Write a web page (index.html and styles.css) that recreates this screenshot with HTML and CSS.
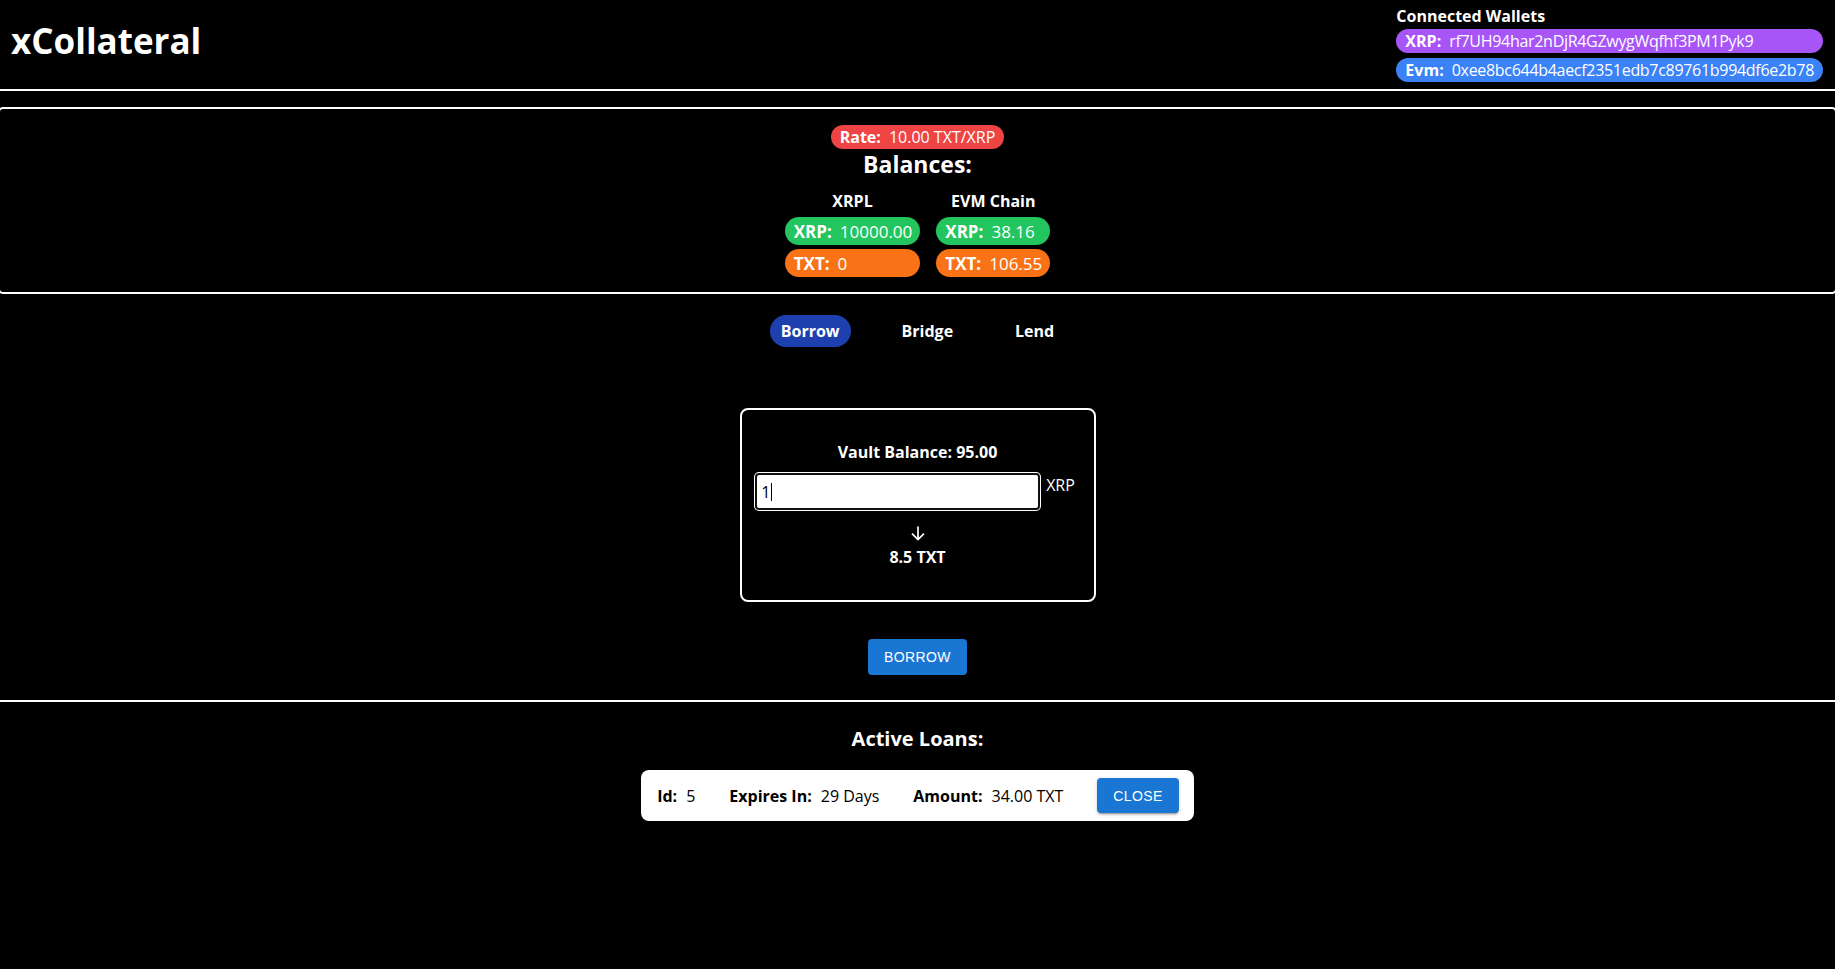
FILE: index.html
```html
<!DOCTYPE html>
<html lang="en">
<head>
<meta charset="utf-8">
<title>xCollateral</title>
<link rel="stylesheet" href="styles.css">
</head>
<body>
<div class="app">
  <header class="topbar">
    <h1 class="brand">xCollateral</h1>
    <div class="wallets">
      <div class="wallets-title">Connected Wallets</div>
      <div class="pill pill-wallet pill-purple"><b>XRP:</b><span class="addr">rf7UH94har2nDjR4GZwygWqfhf3PM1Pyk9</span></div>
      <div class="pill pill-wallet pill-blue"><b>Evm:</b><span class="addr">0xee8bc644b4aecf2351edb7c89761b994df6e2b78</span></div>
    </div>
  </header>

  <section class="balances">
    <div class="pill pill-rate"><b>Rate:</b><span>10.00 TXT/XRP</span></div>
    <h2 class="balances-title">Balances:</h2>
    <div class="chains">
      <div class="chain">
        <div class="chain-name">XRPL</div>
        <div class="pill pill-bal pill-green"><b>XRP:</b><span>10000.00</span></div>
        <div class="pill pill-bal pill-orange"><b>TXT:</b><span>0</span></div>
      </div>
      <div class="chain">
        <div class="chain-name">EVM Chain</div>
        <div class="pill pill-bal pill-green"><b>XRP:</b><span>38.16</span></div>
        <div class="pill pill-bal pill-orange"><b>TXT:</b><span>106.55</span></div>
      </div>
    </div>
  </section>

  <section class="action">
    <nav class="tabs">
      <span class="tab tab-active">Borrow</span>
      <span class="tab">Bridge</span>
      <span class="tab">Lend</span>
    </nav>

    <div class="card">
      <div class="vault">Vault Balance: 95.00</div>
      <div class="amount-row">
        <div class="amount-input">1<span class="caret"></span></div>
        <span class="unit">XRP</span>
      </div>
      <svg class="arrow" width="16" height="15" viewBox="0 0 16 15" aria-hidden="true">
        <path d="M8 0.5 V13.6 M2 7.6 L8 13.6 L14 7.6" fill="none" stroke="#fff" stroke-width="1.7"/>
      </svg>
      <div class="result">8.5 TXT</div>
    </div>

    <button class="mui-btn">Borrow</button>
  </section>

  <section class="loans">
    <h3 class="loans-title">Active Loans:</h3>
    <div class="loan">
      <div class="field"><b>Id:</b><span>5</span></div>
      <div class="field"><b>Expires In:</b><span>29 Days</span></div>
      <div class="field"><b>Amount:</b><span>34.00 TXT</span></div>
      <button class="mui-btn">Close</button>
    </div>
  </section>
</div>
</body>
</html>
```

FILE: styles.css
```css
html, body {
  margin: 0;
  padding: 0;
  background: #000;
  color: #fff;
  font-family: "Open Sans", "Noto Sans", "DejaVu Sans", sans-serif;
  font-size: 16px;
}

.app {
  overflow: hidden;
  min-height: 969px;
}

/* Header */
.topbar {
  box-sizing: border-box;
  height: 91px;
  display: flex;
  justify-content: space-between;
  align-items: flex-start;
  padding: 6px 12px 0 11px;
  border-bottom: 2px solid #fff;
}

.brand {
  margin: 16px 0 0;
  font-size: 35px;
  line-height: 38px;
  font-weight: 700;
}

.wallets {
  display: flex;
  flex-direction: column;
  align-items: stretch;
}

.wallets-title {
  font-weight: 700;
  font-size: 16px;
  line-height: 20px;
  margin-bottom: 3px;
}

.pill {
  display: flex;
  align-items: center;
  gap: 8px;
  border-radius: 999px;
  white-space: nowrap;
}

.pill-wallet {
  height: 24px;
  padding: 0 9px;
  font-size: 16px;
  margin-bottom: 5px;
}

.addr {
  letter-spacing: -0.3px;
}

.pill-purple { background: #a855f7; }
.pill-blue { background: #3b82f6; }
.pill-green { background: #22c55e; }
.pill-orange { background: #f97316; }

/* Balances box */
.balances {
  margin: 16px -2px 0;
  border: 2px solid #fff;
  border-radius: 5px;
  padding: 16px 0 15px;
  display: flex;
  flex-direction: column;
  align-items: center;
}

.pill-rate {
  background: #ef4444;
  height: 24px;
  padding: 0 9px;
  font-size: 16px;
}

.balances-title {
  margin: 1px 0 0;
  font-size: 23px;
  line-height: 28px;
  font-weight: 700;
}

.chains {
  display: flex;
  gap: 16px;
  margin-top: 12px;
}

.chain {
  display: flex;
  flex-direction: column;
  align-items: stretch;
  gap: 4px;
}

.chain-name {
  text-align: center;
  font-weight: 700;
  font-size: 16px;
  line-height: 22px;
  margin-bottom: 1px;
}

.pill-bal {
  height: 28px;
  padding: 0 8px 0 9px;
  font-size: 17px;
}

/* Action section */
.action {
  display: flex;
  flex-direction: column;
  align-items: center;
  padding: 21px 0 25px;
  border-bottom: 2px solid #fff;
}

.tabs {
  display: flex;
  gap: 40px;
}

.tab {
  display: block;
  height: 32px;
  line-height: 32px;
  padding: 0 11px;
  border-radius: 16px;
  font-weight: 700;
  font-size: 16px;
}

.tab-active {
  background: #1e40af;
}

.card {
  margin-top: 61px;
  box-sizing: border-box;
  width: 356px;
  border: 2px solid #fff;
  border-radius: 8px;
  padding: 31px 0 32px;
  display: flex;
  flex-direction: column;
  align-items: center;
}

.vault {
  font-weight: 700;
  font-size: 16px;
  line-height: 22px;
}

.amount-row {
  margin-top: 10px;
  display: flex;
  align-items: flex-start;
  gap: 6px;
  padding-right: 5px;
}

.amount-input {
  box-sizing: border-box;
  width: 285px;
  height: 37px;
  background: #fff;
  color: #000;
  border: 2px solid #101010;
  border-radius: 4px;
  box-shadow: 0 0 0 1px #fff;
  padding: 0 4px;
  display: flex;
  align-items: center;
  font-size: 16px;
}

.caret {
  display: inline-block;
  width: 1px;
  height: 18px;
  background: #000;
  margin-left: 1px;
}

.unit {
  font-size: 16px;
  line-height: 22px;
  margin-top: 1px;
}

.arrow {
  display: block;
  margin-top: 16px;
}

.result {
  margin-top: 5px;
  font-weight: 700;
  font-size: 16px;
  line-height: 22px;
}

.mui-btn {
  margin-top: 37px;
  box-sizing: border-box;
  height: 36px;
  padding: 0 16px;
  border: 0;
  border-radius: 4px;
  background: #1976d2;
  color: #fff;
  font-family: "Liberation Sans", Arial, sans-serif;
  font-size: 14px;
  font-weight: 400;
  letter-spacing: 0.4px;
  text-transform: uppercase;
  box-shadow: 0 3px 1px -2px rgba(0,0,0,0.2), 0 2px 2px 0 rgba(0,0,0,0.14), 0 1px 5px 0 rgba(0,0,0,0.12);
  cursor: pointer;
}

/* Loans */
.loans {
  display: flex;
  flex-direction: column;
  align-items: center;
  padding-top: 24px;
}

.loans-title {
  margin: 0;
  font-size: 20px;
  line-height: 26px;
  font-weight: 700;
}

.loan {
  margin-top: 18px;
  background: #fff;
  color: #000;
  border-radius: 8px;
  padding: 8px 15px 8px 16px;
  display: flex;
  align-items: center;
  gap: 34px;
}

.field {
  display: flex;
  gap: 9px;
  font-size: 16px;
  line-height: 22px;
}

.loan .mui-btn {
  margin-top: 0;
  height: 35px;
}
```
